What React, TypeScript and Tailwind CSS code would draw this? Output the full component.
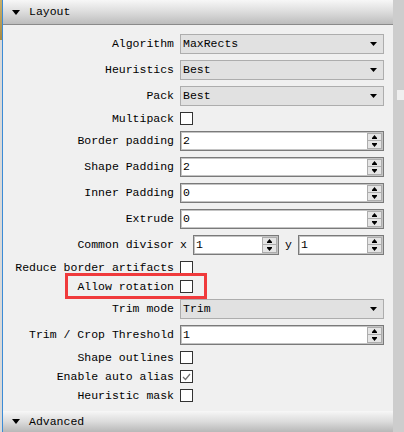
import React from "react";

const font = { fontFamily: '"Liberation Mono", "DejaVu Sans Mono", monospace' };

function DownTri({ className = "" }: { className?: string }) {
  return (
    <svg width="7" height="4" viewBox="0 0 7 4" className={className}>
      <polygon points="0,0 7,0 3.5,4" fill="#000" />
    </svg>
  );
}

function Combo({ value }: { value: string }) {
  return (
    <div className="w-[204px] h-[20px] border border-[#adadad] bg-[#e1e1e1] flex items-center pl-[2px] pr-[6px]">
      <span className="flex-1 text-black">{value}</span>
      <DownTri />
    </div>
  );
}

function SpinButtons() {
  return (
    <div className="flex flex-col mr-[1px]">
      <div className="w-[15px] h-[8px] border border-[#adadad] bg-[#e5e5e5] flex items-center justify-center">
        <svg width="5" height="4" viewBox="0 0 5 4">
          <polygon points="2.5,0 5,3 0,3" fill="#000" />
          <rect x="0" y="3" width="5" height="1" fill="#000" />
        </svg>
      </div>
      <div className="w-[15px] h-[8px] border border-[#adadad] border-t-0 bg-[#e5e5e5] flex items-center justify-center">
        <svg width="5" height="4" viewBox="0 0 5 4">
          <rect x="0" y="0" width="5" height="1" fill="#000" />
          <polygon points="0,1 5,1 2.5,4" fill="#000" />
        </svg>
      </div>
    </div>
  );
}

function Spin({ value, w = "w-[204px]" }: { value: string; w?: string }) {
  return (
    <div className={`${w} h-[20px] border border-[#7a7a7a] bg-white flex items-center pl-[2px] shadow-[inset_0_0_0_1px_#c4c4c4]`}>
      <span className="flex-1 text-black">{value}</span>
      <SpinButtons />
    </div>
  );
}

function Check({ checked = false }: { checked?: boolean }) {
  return (
    <div className="w-[13px] h-[13px] border border-[#333333] bg-white flex items-center justify-center">
      {checked && (
        <svg width="9" height="8" viewBox="0 0 9 8">
          <polyline points="1,4 3.5,6.5 8,1" fill="none" stroke="#707070" strokeWidth="1.2" />
        </svg>
      )}
    </div>
  );
}

function Row({ label, h, children }: { label: string; h: string; children: React.ReactNode }) {
  return (
    <div className={`flex items-center ${h}`}>
      <div className="w-[171px] text-right pr-0 whitespace-nowrap">{label}</div>
      <div className="ml-[6px] flex items-center">{children}</div>
    </div>
  );
}

function Header({ title, h }: { title: string; h: string }) {
  return (
    <div
      className={`${h} flex items-center bg-gradient-to-b from-[#f7f7f7] via-[#dcdcdc] to-[#bdbdbd] border-b border-[#8a8a8a]`}
    >
      <svg width="8" height="5" viewBox="0 0 8 5" className="ml-[9px]">
        <polygon points="0,0 8,0 4,5" fill="#000" />
      </svg>
      <span className="ml-[9px] text-black">{title}</span>
    </div>
  );
}

export default function App() {
  return (
    <div className="w-[404px] h-[432px] flex overflow-hidden bg-[#f0f0f0] text-[11.5px] leading-none" style={font}>
      <div className="w-[2px] h-full flex flex-col">
        <div className="h-[40px] bg-gradient-to-b from-[#c9b06a] to-[#a88b45]" />
        <div className="flex-1 bg-[#d9d9d9]" />
      </div>
      <div className="w-px h-full bg-[#3b8bd6]" />
      <div className="w-[390px] h-full flex flex-col">
        <Header title="Layout" h="h-[25px]" />
        <div className="flex-1 flex flex-col gap-[6px] pt-[9px]">
          <Row label="Algorithm" h="h-[20px]"><Combo value="MaxRects" /></Row>
          <Row label="Heuristics" h="h-[20px]"><Combo value="Best" /></Row>
          <Row label="Pack" h="h-[20px]"><Combo value="Best" /></Row>
          <Row label="Multipack" h="h-[13px]"><Check /></Row>
          <Row label="Border padding" h="h-[20px]"><Spin value="2" /></Row>
          <Row label="Shape Padding" h="h-[20px]"><Spin value="2" /></Row>
          <Row label="Inner Padding" h="h-[20px]"><Spin value="0" /></Row>
          <Row label="Extrude" h="h-[20px]"><Spin value="0" /></Row>
          <Row label="Common divisor" h="h-[20px]">
            <span className="w-[7px]">x</span>
            <div className="ml-[6px]"><Spin value="1" w="w-[86px]" /></div>
            <span className="ml-[6px] w-[7px]">y</span>
            <div className="ml-[6px]"><Spin value="1" w="w-[86px]" /></div>
          </Row>
          <Row label="Reduce border artifacts" h="h-[13px]"><Check /></Row>
          <div className="relative">
            <Row label="Allow rotation" h="h-[13px]"><Check /></Row>
            <div className="absolute left-[62px] top-[-7px] w-[142px] h-[26px] border-[3px] border-[#f03a3c]" />
          </div>
          <Row label="Trim mode" h="h-[20px]"><Combo value="Trim" /></Row>
          <Row label="Trim / Crop Threshold" h="h-[20px]"><Spin value="1" /></Row>
          <Row label="Shape outlines" h="h-[13px]"><Check /></Row>
          <Row label="Enable auto alias" h="h-[13px]"><Check checked /></Row>
          <Row label="Heuristic mask" h="h-[13px]"><Check /></Row>
        </div>
        <div className="h-[21px] flex items-center bg-gradient-to-b from-[#f7f7f7] via-[#dcdcdc] to-[#b8b8b8]">
          <svg width="8" height="5" viewBox="0 0 8 5" className="ml-[9px]">
            <polygon points="0,0 8,0 4,5" fill="#000" />
          </svg>
          <span className="ml-[9px] text-black">Advanced</span>
        </div>
      </div>
      <div className="w-[11px] h-full bg-[#cdcdcd] flex flex-col">
        <div className="h-[90px]" />
        <div className="h-[10px] ml-[4px] bg-[#efefef]" />
      </div>
    </div>
  );
}
